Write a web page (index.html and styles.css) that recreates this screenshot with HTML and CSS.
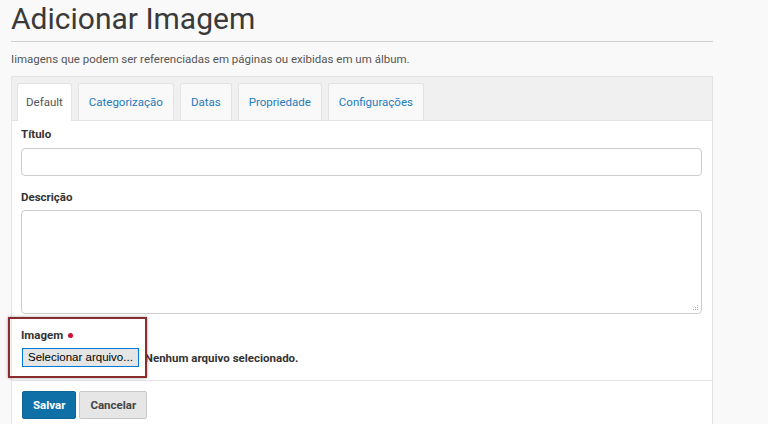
FILE: index.html
```html
<!DOCTYPE html>
<html lang="pt">
<head>
<meta charset="utf-8">
<title>Adicionar Imagem</title>
<link rel="stylesheet" href="styles.css">
</head>
<body>
<div class="page">
  <h1 class="title">Adicionar Imagem</h1>
  <p class="lead">Iimagens que podem ser referenciadas em páginas ou exibidas em um álbum.</p>
  <div class="panel">
    <ul class="tabs">
      <li class="tab active">Default</li>
      <li class="tab">Categorização</li>
      <li class="tab">Datas</li>
      <li class="tab">Propriedade</li>
      <li class="tab">Configurações</li>
    </ul>
    <div class="panel-body">
      <div class="field">
        <label class="label">Título</label>
        <div class="input"></div>
      </div>
      <div class="field">
        <label class="label">Descrição</label>
        <div class="textarea">
          <svg class="grip" width="6" height="6" viewBox="0 0 6 6"><g fill="#aaa"><rect x="4" y="0" width="1" height="1"/><rect x="2" y="2" width="1" height="1"/><rect x="4" y="2" width="1" height="1"/><rect x="0" y="4" width="1" height="1"/><rect x="2" y="4" width="1" height="1"/><rect x="4" y="4" width="1" height="1"/></g></svg>
        </div>
      </div>
      <div class="field file-field">
        <label class="label">Imagem <span class="req"></span></label>
        <div class="file-row">
          <span class="file-btn">Selecionar arquivo...</span>
          <span class="file-name">Nenhum arquivo selecionado.</span>
        </div>
        <div class="highlight"></div>
      </div>
    </div>
    <div class="actions">
      <span class="btn btn-primary">Salvar</span>
      <span class="btn btn-default">Cancelar</span>
    </div>
  </div>
</div>
</body>
</html>
```
FILE: styles.css
```css
html, body {
  margin: 0;
  padding: 0;
  background: #f9f9f9;
  font-family: Roboto, "Liberation Sans", Arial, sans-serif;
  color: #333;
}
.page {
  width: 702px;
  padding: 0 0 0 11px;
}
.title {
  margin: 0;
  padding: 1px 0 4px 0;
  font-size: 30px;
  line-height: 36px;
  font-weight: 400;
  color: #3a3a3a;
  border-bottom: 1px solid #cfcfcf;
}
.lead {
  margin: 0;
  padding: 9px 0 0 0;
  font-size: 11.5px;
  line-height: 16px;
  color: #555;
}
.panel {
  margin-top: 9px;
  border: 1px solid #e3e3e3;
  border-bottom: none;
  background: #fff;
  height: 360px;
}
.tabs {
  list-style: none;
  margin: 0;
  padding: 6px 0 0 5px;
  display: flex;
  gap: 6px;
  background: #f0f0f0;
  border-bottom: 1px solid #e3e3e3;
  height: 37px;
}
.tab {
  height: 37px;
  box-sizing: border-box;
  border: 1px solid #e3e3e3;
  border-bottom: none;
  border-radius: 3px 3px 0 0;
  background: #f9f9f9;
  padding: 0 10px;
  font-size: 11.5px;
  line-height: 36px;
  color: #1e7bbd;
}
.tab.active {
  background: #fff;
  color: #555;
  height: 38px;
  padding: 0 8px;
}
.panel-body {
  padding: 5px 10px 13px 9px;
}
.field {
  margin-bottom: 13px;
}
.field:last-child {
  margin-bottom: 0;
}
.label {
  display: block;
  font-size: 11.5px;
  line-height: 16px;
  font-weight: 700;
  color: #333;
  margin-bottom: 6px;
}
.input {
  height: 26px;
  border: 1px solid #ccc;
  border-radius: 4px;
  background: #fff;
}
.textarea {
  height: 100px;
  border: 1px solid #ccc;
  border-radius: 4px;
  background: #fff;
  display: flex;
  align-items: flex-end;
  justify-content: flex-end;
  padding: 0 2px 2px 0;
  margin-top: -1px;
}
.grip {
  display: block;
}
.req {
  display: inline-block;
  width: 5px;
  height: 5px;
  border-radius: 50%;
  background: #c8102e;
  margin-left: 2px;
  vertical-align: 1px;
}
.file-field {
  position: relative;
}
.file-field .label {
  margin-bottom: 5px;
}
.file-row {
  display: flex;
  align-items: center;
  gap: 6px;
  margin-left: 1px;
}
.file-btn {
  box-sizing: border-box;
  height: 19px;
  padding: 0 5px;
  border: 1px solid #0078d7;
  background: #e5e5e5;
  font-family: "Liberation Sans", Arial, sans-serif;
  font-size: 11.5px;
  line-height: 17px;
  color: #000;
}
.file-name {
  font-size: 11.5px;
  font-weight: 700;
  color: #333;
}
.highlight {
  position: absolute;
  left: -13px;
  top: -10px;
  width: 135px;
  height: 57px;
  border: 2px solid #8a2b2e;
  box-shadow: 0 0 3px rgba(0,0,0,0.35);
}
.actions {
  border-top: 1px solid #e3e3e3;
  padding: 10px 10px;
  display: flex;
  gap: 3px;
}
.btn {
  box-sizing: border-box;
  height: 28px;
  padding: 0 10px;
  font-size: 11.5px;
  line-height: 26px;
  font-weight: 700;
  border-radius: 2px;
  border: 1px solid transparent;
}
.btn-primary {
  background: #0f70a8;
  border-color: #0d6598;
  color: #fff;
}
.btn-default {
  background: #e6e6e6;
  border-color: #c9c9c9;
  color: #444;
}
```
